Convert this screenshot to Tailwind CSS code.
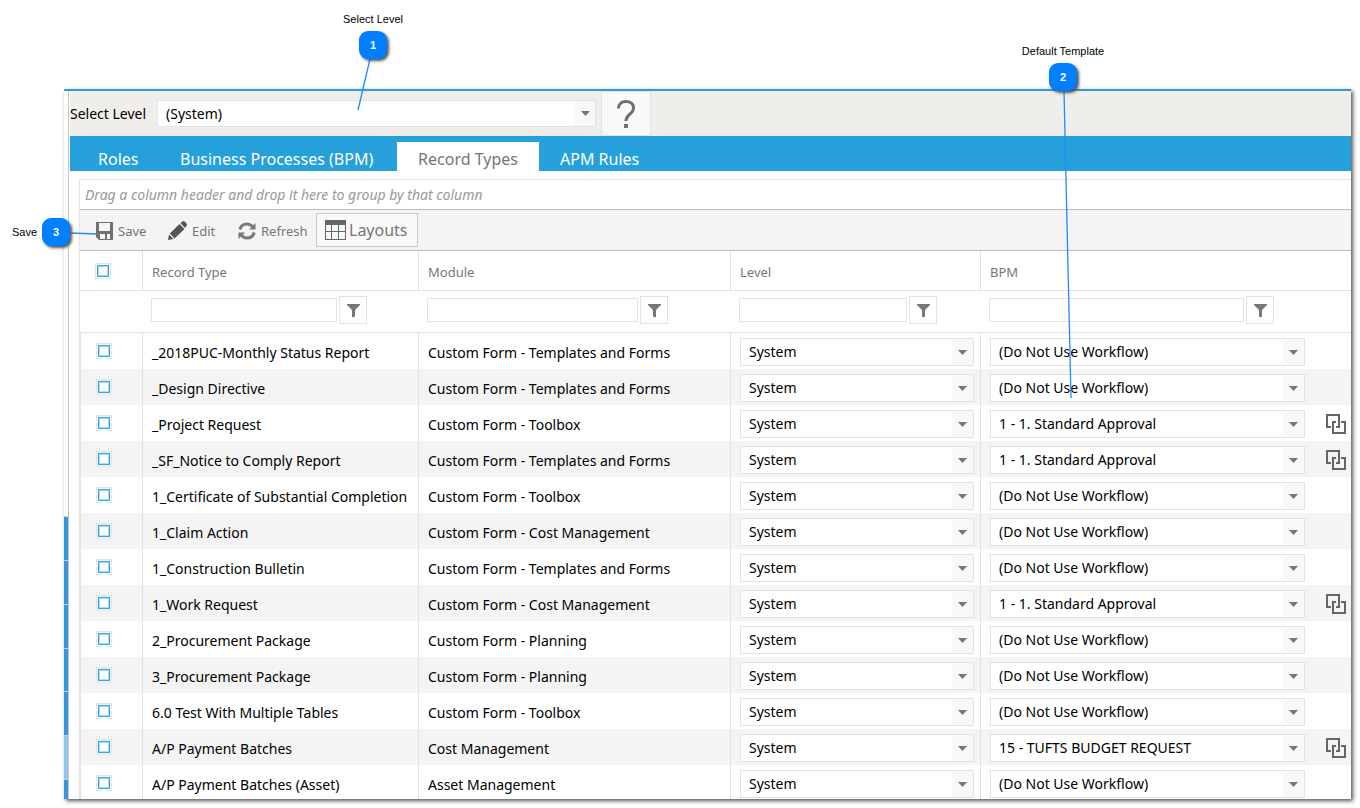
<!DOCTYPE html>
<html lang="en">
<head>
<meta charset="utf-8">
<title>Record Types</title>
<script src="https://cdn.jsdelivr.net/npm/@tailwindcss/browser@4"></script>
</head>
<body class="relative flex h-screen flex-col overflow-hidden bg-white pt-[89px] pr-[9px] pb-[9px] pl-16 font-['Noto_Sans','Open_Sans',sans-serif] text-sm text-black">

<main class="flex min-h-0 flex-1 flex-col border-t-2 border-[#3498db] bg-white shadow-[2px_2px_4px_#555]">
  <div class="flex min-h-0 flex-1">
    <div class="flex w-1 shrink-0 flex-col" aria-hidden="true">
      <div class="h-[425px] shrink-0"></div>
      <div class="h-11 shrink-0 border-t border-[#cfcac7] bg-[#3498db]"></div>
      <div class="h-11 shrink-0 border-t border-[#cfcac7] bg-[#3498db]"></div>
      <div class="h-11 shrink-0 border-t border-[#cfcac7] bg-[#3498db]"></div>
      <div class="h-[43px] shrink-0 border-t border-[#cfcac7] bg-[#3498db]"></div>
      <div class="h-11 shrink-0 border-t border-[#cfcac7] bg-[#3498db]"></div>
      <div class="h-11 shrink-0 border-t border-[#cfcac7] bg-[#8fc6ed]"></div>
      <div class="min-h-0 flex-1 border-t border-[#cfcac7] bg-[#3498db]"></div>
    </div>
    <div class="min-w-0 flex-1 overflow-hidden border-l border-[#c4c4c4] pl-px">

      <div class="flex h-[45px] items-center bg-[#efeeea]">
        <label for="level" class="w-[87px] shrink-0">Select Level</label>
        <div class="relative h-[27px] w-[439px]">
          <select id="level" class="size-full appearance-none border border-[#e0e2e4] bg-white pl-2"><option>(System)</option></select>
          <span class="pointer-events-none absolute inset-y-px right-px flex w-5 items-center justify-center bg-[#f8f8f8]"><svg class="h-[5px] w-[9px]" viewBox="0 0 9 5" fill="#777"><path d="M0 0h9L4.500 5z"/></svg></span>
        </div>
        <button aria-label="Help" class="ml-[5px] flex h-[45px] w-[50px] items-center justify-center border border-[#e0e2e4] bg-[#f9f9f9]">
          <svg class="h-7 w-[18px]" viewBox="0 0 18 28" fill="none" stroke="#707070" stroke-width="3"><path d="M1.500 8.500C1.500 4 4.500 1.500 9 1.500s7.500 2.500 7.500 6.500c0 3-1.500 4.500-4 6.500S9 18 9 21"/><path d="M9 24v4" stroke-width="4"/></svg>
        </button>
      </div>

      <nav class="flex h-[35px] items-end bg-[#25a0da] text-base text-white">
        <a href="#" class="flex h-[29px] w-[89px] items-center pt-1 pl-7">Roles</a>
        <a href="#" class="flex h-[29px] w-[238px] items-center pt-1 pl-[21px]">Business Processes (BPM)</a>
        <a href="#" aria-current="page" class="flex h-[29px] w-[142px] items-center justify-center bg-white pt-1 text-[#767676]">Record Types</a>
        <a href="#" class="flex h-[29px] items-center pt-1 pl-[21px]">APM Rules</a>
      </nav>

      <section class="mt-2 ml-[9px] border-t border-l border-[#e0e2e4]">
        <div class="flex h-[29px] items-center pl-[5px] text-[#999] italic">Drag a column header and drop it here to group by that column</div>
        <div class="flex h-[42px] items-center border-y border-[#bbbbc0] bg-[#f4f4f4] text-[13px] text-[#767676]">
          <button class="ml-4 flex w-[72px] items-center gap-[5px] pt-0.5">
            <svg class="h-[18px] w-[17px]" viewBox="0 0 17 18"><path fill="#707070" d="M0 0h17v18H3l-3-3z"/><path fill="#f4f4f4" d="M3 1h11v8H3zM4 12h5v5H4zM11 12h3v5h-3z"/></svg>Save</button>
          <button class="flex w-[70px] items-center gap-[5px] pt-0.5">
            <svg class="h-5 w-[19px]" viewBox="0 0 19 20" fill="#555"><path d="M0 19l1-5.500L5.500 18zM1.800 12.500L11.500 3l5 5-10 9.500zM12.500 2.200l2-1.700q1-.9 2 0L18.600 2.500q.8 1 0 2L17.200 7z"/></svg>Edit</button>
          <button class="flex w-[78px] items-center gap-[5px] pt-0.5">
            <svg class="h-[18px] w-[18px]" viewBox="0 0 18 18" fill="none" stroke="#777" stroke-width="3"><path d="M1.800 7.500C2.800 4 5.500 2 9 2c2.500 0 4 .8 5.500 2.500"/><path d="M16.200 10.500C15.200 14 12.500 16 9 16c-2.500 0-4-.8-5.500-2.500"/><path stroke="none" fill="#777" d="M17.500 1v6.500H11zM.5 17v-6.500H7z"/></svg>Refresh</button>
          <button class="flex h-[34px] w-[102px] items-center gap-[3px] border border-[#c8c8c8] bg-[#f9f9f9] pl-2 text-base">
            <svg class="h-5 w-[21px] shrink-0" viewBox="0 0 21 20"><path fill="#666" d="M0 0h21v20H0z"/><path fill="#f9f9f9" d="M1 5h5v6H1zM7 5h6v6H7zM14 5h6v6h-6zM1 12h5v7H1zM7 12h6v7H7zM14 12h6v7h-6z"/></svg>Layouts</button>
        </div>

        <table class="w-full table-fixed border-separate border-spacing-0 text-left">
          <colgroup><col class="w-[63px]"><col class="w-[276px]"><col class="w-[312px]"><col class="w-[250px]"><col></colgroup>
          <thead id="head"></thead>
          <tbody id="body"></tbody>
        </table>
      </section>
    </div>
  </div>
</main>

<svg class="pointer-events-none absolute inset-0 size-full" fill="none" stroke="#1e8cff" stroke-width="1.300" aria-hidden="true">
  <path d="M370 59L358 110M1064 91L1071 398M70 233L98 234"/>
</svg>
<div class="absolute top-3 left-[343px] flex w-[60px] flex-col items-center font-['Liberation_Sans',Arial,sans-serif] text-[11px] leading-[14px] whitespace-nowrap">Select Level
  <span class="mt-[5px] flex size-7 items-center justify-center rounded-[9px] bg-[#007fff] font-bold text-white shadow-[2px_2px_3px_#555]">1</span></div>
<div class="absolute top-11 left-[1023px] flex w-20 flex-col items-center font-['Liberation_Sans',Arial,sans-serif] text-[11px] leading-[14px] whitespace-nowrap">Default Template
  <span class="mt-[5px] flex size-7 items-center justify-center rounded-[9px] bg-[#007fff] font-bold text-white shadow-[2px_2px_3px_#555]">2</span></div>
<div class="absolute top-[218px] left-3 flex items-center gap-[5px] font-['Liberation_Sans',Arial,sans-serif] text-[11px] leading-[14px]">Save
  <span class="flex size-7 items-center justify-center rounded-[9px] bg-[#007fff] font-bold text-white shadow-[2px_2px_3px_#555]">3</span></div>

<script>
const none = '(Do Not Use Workflow)', std = '1 - 1. Standard Approval';
const tf = 'Custom Form - Templates and Forms', tb = 'Custom Form - Toolbox', cm = 'Custom Form - Cost Management', pl = 'Custom Form - Planning';
const rows = [
  ['_2018PUC-Monthly Status Report', tf, none],
  ['_Design Directive', tf, none],
  ['_Project Request', tb, std],
  ['_SF_Notice to Comply Report', tf, std],
  ['1_Certificate of Substantial Completion', tb, none],
  ['1_Claim Action', cm, none],
  ['1_Construction Bulletin', tf, none],
  ['1_Work Request', cm, std],
  ['2_Procurement Package', pl, none],
  ['3_Procurement Package', pl, none],
  ['6.0 Test With Multiple Tables', tb, none],
  ['A/P Payment Batches', 'Cost Management', '15 - TUFTS BUDGET REQUEST'],
  ['A/P Payment Batches (Asset)', 'Asset Management', none],
];
const check = label => `<input type="checkbox" aria-label="${label}" class="block size-3 appearance-none border border-[#2ba3de] bg-white shadow-[inset_0_0_0_1px_#a9dbf4] outline outline-offset-1 outline-[#e4e4e4]">`;
const drop = (label, value) => `<div class="relative h-7 min-w-0 flex-1">
  <select aria-label="${label}" class="size-full appearance-none border border-[#e0e2e4] bg-white pl-2"><option>${value}</option></select>
  <span class="pointer-events-none absolute inset-y-px right-px flex w-[21px] items-center justify-center bg-[#f8f8f8]"><svg class="h-[5px] w-[9px]" viewBox="0 0 9 5" fill="#777"><path d="M0 0h9L4.500 5z"/></svg></span></div>`;
const filter = (name, width) => `<td class="h-[42px] border-b border-[#e0e2e4] p-0 pl-2"><div class="mt-[-4px] flex items-center gap-0.5">
  <input type="text" aria-label="Filter ${name}" class="h-6 ${width} border border-[#e0e2e4] px-2">
  <button aria-label="Filter options for ${name}" class="flex size-7 items-center justify-center border border-[#e0e2e4] pt-0.5"><svg class="h-[13px] w-[13px]" viewBox="0 0 13 13" fill="#777"><path d="M0 0h13v1L8 6V13H5V6L0 1z"/></svg></button></div></td>`;
const th = name => `<th scope="col" class="border-b border-[#e0e2e4] p-0 pt-1 pl-[9px] text-[13px] font-normal text-[#767676] not-last:border-r">${name}</th>`;
document.getElementById('head').innerHTML =
  `<tr class="h-10"><th scope="col" class="border-r border-b border-[#e0e2e4] p-0 pl-[17px]">${check('Select all')}</th>${th('Record Type')}${th('Module')}${th('Level')}${th('BPM')}</tr>
  <tr><td class="border-b border-[#e0e2e4]"></td>${filter('Record Type', 'w-[186px]')}${filter('Module', 'w-[211px]')}${filter('Level', 'w-[168px]')}${filter('BPM', 'w-[255px]')}</tr>`;
const link = `<button aria-label="Open workflow" class="size-5"><svg class="size-5" viewBox="0 0 20 20" fill="none" stroke="#666" stroke-width="2"><path d="M5 13H1V1h12v12h-3M10 8H7v11h12V8h-4"/></svg></button>`;
document.getElementById('body').innerHTML = rows.map(([name, module, bpm]) => `<tr class="h-9 even:bg-[#f4f4f4]">
  <td class="border-r border-l border-[#e0e2e4] p-0 pl-[17px]">${check('Select ' + name)}</td>
  <td class="border-r border-[#e0e2e4] p-0 pt-1 pl-[9px] whitespace-nowrap">${name}</td>
  <td class="border-r border-[#e0e2e4] p-0 pt-1 pl-[9px] whitespace-nowrap">${module}</td>
  <td class="border-r border-[#e0e2e4] p-0 pt-0.5 pr-1.5 pl-[9px]"><div class="flex">${drop('Level of ' + name, 'System')}</div></td>
  <td class="p-0 pt-0.5 pr-[5px] pl-[9px]"><div class="flex items-center gap-[21px]">${drop('BPM of ' + name, bpm)}${bpm === none ? '<span class="w-5"></span>' : link}</div></td></tr>`).join('');
</script>
</body>
</html>
